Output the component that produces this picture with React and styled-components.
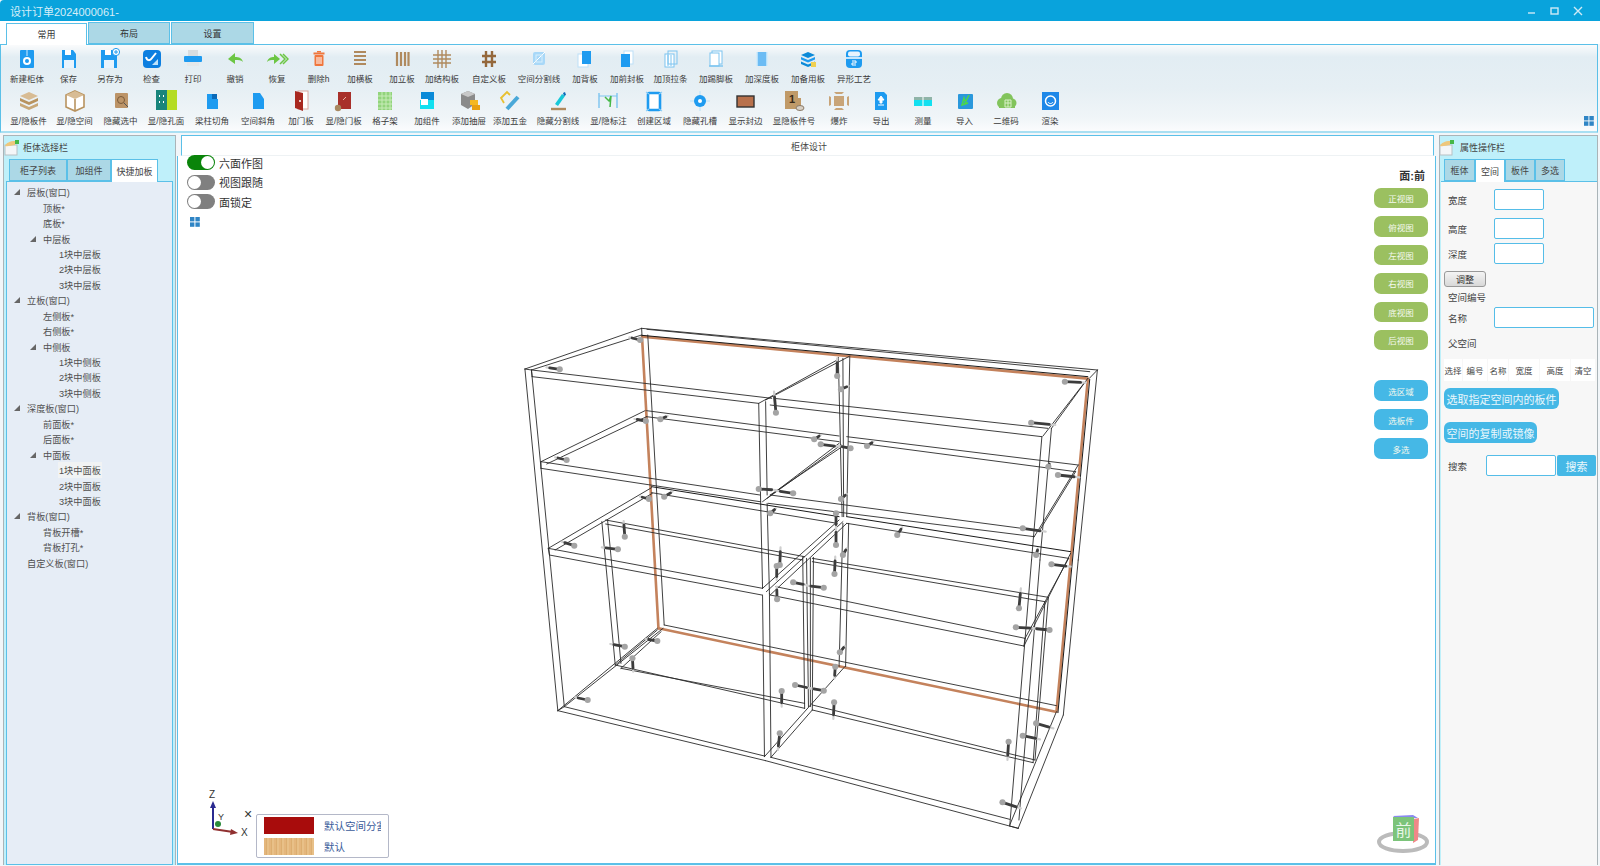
import React from 'react';
import styled, { createGlobalStyle } from 'styled-components';

const GlobalStyle = createGlobalStyle`
  html, body { margin: 0; padding: 0; overflow: hidden; background: #fff; }
  body { font-family: "Liberation Sans", "Noto Sans CJK SC", sans-serif; }
`

const BLUE = '#5bc0e8';

const Page = styled.div`
  width: 1600px;
  height: 866px;
  display: flex;
  flex-direction: column;
  background: #f2f6f9;
  overflow: hidden;
`

const TitleBar = styled.div`
  height: 21px;
  flex: none;
  background: #09a3dc;
  border-radius: 4px 0 0 0;
  display: flex;
  align-items: center;
  justify-content: space-between;
  padding: 0 16px 0 10px;
  color: #d6eef8;
  font-size: 11px;
`

const WinButtons = styled.div`
  display: flex;
  align-items: center;
  gap: 11px;
`

const TabBar = styled.div`
  height: 23px;
  flex: none;
  background: #fff;
  display: flex;
  align-items: flex-end;
  padding-left: 6px;
  gap: 1px;
`

const MainTab = styled.div`
  width: ${p => p.$w}px;
  height: 22px;
  box-sizing: border-box;
  display: flex;
  align-items: center;
  justify-content: center;
  font-size: 9px;
  color: #333;
  border: 1px solid ${BLUE};
  border-bottom: ${p => (p.$active ? '0' : `1px solid ${BLUE}`)};
  background: ${p => (p.$active ? '#fff' : '#acd8e6')};
  margin-bottom: ${p => (p.$active ? '-1px' : '0')};
  position: relative;
  z-index: 1;
`

const Ribbon = styled.div`
  height: 89px;
  flex: none;
  position: relative;
  box-sizing: border-box;
  border: 1px solid ${BLUE};
  border-bottom: 2px solid #a8dff2;
  margin-right: 2px;
  background: linear-gradient(#fafbfc 0%, #e2edf3 14%, #e6eff4 50%, #f0f5f8 85%, #fbfcfd 100%);
`

const RibbonRow = styled.div`
  height: 42px;
  display: flex;
`

const RibbonItem = styled.div`
  width: 40px;
  flex: none;
  margin-left: ${p => p.$ml}px;
  display: flex;
  flex-direction: column;
  align-items: center;
  color: #3a3a3a;
  font-size: 8.5px;
  line-height: 12px;
  white-space: nowrap;
`

const IconBox = styled.div`
  height: 27px;
  display: flex;
  align-items: center;
  justify-content: center;
  margin-bottom: 1px;
`

const CornerGrid = styled.div`
  position: absolute;
  right: 3px;
  bottom: 1px;
`

const Main = styled.div`
  flex: 1;
  display: flex;
  min-height: 0;
  padding: 2px 2px 1px 3px;
`

const SidePanel = styled.div`
  width: ${p => p.$w}px;
  flex: none;
  box-sizing: border-box;
  display: flex;
  flex-direction: column;
  border: 1px solid #aab4b8;
  border-bottom: 0;
  background: #bff0fa;
  padding: 0 ${p => p.$pr}px 0 ${p => p.$pl}px;
`

const PanelHead = styled.div`
  height: 23px;
  flex: none;
  display: flex;
  align-items: center;
  margin-left: ${p => p.$ml}px;
  gap: ${p => p.$gap}px;
  font-size: 9px;
  color: #444;
`

const SubTabs = styled.div`
  height: 22px;
  flex: none;
  display: flex;
  padding-left: ${p => p.$pl}px;
`

const SubTab = styled.div`
  width: ${p => p.$w}px;
  box-sizing: border-box;
  display: flex;
  align-items: center;
  justify-content: center;
  font-size: 9px;
  color: #444;
  border: 1px solid ${BLUE};
  border-bottom: ${p => (p.$active ? '0' : `1px solid ${BLUE}`)};
  background: ${p => (p.$active ? '#fff' : '#acd8e6')};
  height: ${p => (p.$active ? '23px' : '22px')};
  position: relative;
  z-index: 1;
`

const TreeBody = styled.div`
  flex: 1;
  box-sizing: border-box;
  border: 1px solid ${BLUE};
  background: #e6edf6;
  padding-top: 2.5px;
`

const TreeRow = styled.div`
  height: 15.45px;
  display: flex;
  align-items: center;
  padding-left: ${p => 4 + p.$level * 16}px;
  font-size: 9.2px;
  color: #505050;
  white-space: nowrap;
`

const TreeArrow = styled.span`
  width: 0;
  height: 0;
  flex: none;
  margin-right: 6px;
  margin-left: 3px;
  visibility: ${p => (p.$show ? 'visible' : 'hidden')};
  border-style: solid;
  border-width: 0 0 6px 6px;
  border-color: transparent transparent #666 transparent;
`

const TreeText = styled.span`
  background: ${p => (p.$hover ? '#f1f3f4' : 'transparent')};
  padding: 1px 1px;
`

const CenterPanel = styled.div`
  flex: 1;
  display: flex;
  flex-direction: column;
  margin: 0 3px 0 1px;
  min-width: 0;
`

const CenterHead = styled.div`
  height: 21px;
  flex: none;
  box-sizing: border-box;
  margin: 0 2px 0 4px;
  padding: 2px 0 0 3px;
  background: #fff;
  border: 1px solid ${BLUE};
  border-bottom: 1px solid #eef2f4;
  display: flex;
  align-items: center;
  justify-content: center;
  font-size: 9px;
  color: #444;
`

const Canvas = styled.div`
  flex: 1;
  position: relative;
  display: flex;
  justify-content: space-between;
  background: #fff;
  box-sizing: border-box;
  border: 1px solid ${BLUE};
  border-top: 0;
  border-bottom: 2px solid ${BLUE};
`

const ToggleColumn = styled.div`
  display: flex;
  flex-direction: column;
  gap: 4px;
  padding-left: 9px;
  margin-top: -1px;
`

const ToggleRow = styled.div`
  display: flex;
  align-items: center;
  gap: 4px;
  height: 15.5px;
  font-size: 11px;
  color: #333;
`

const Toggle = styled.div`
  width: 28px;
  height: 15px;
  box-sizing: border-box;
  border-radius: 8px;
  display: flex;
  align-items: center;
  padding: 0 1px;
  justify-content: ${p => (p.$on ? 'flex-end' : 'flex-start')};
  background: ${p => (p.$on ? '#0a840a' : '#808080')};
`

const Knob = styled.div`
  width: 13px;
  height: 13px;
  border-radius: 50%;
  background: #fff;
`

const GridSlot = styled.span`
  display: flex;
  margin: 2px 0 0 3px;
`

const ViewColumn = styled.div`
  display: flex;
  flex-direction: column;
  align-items: flex-end;
  padding: 13px 7px 0 0;
  position: relative;
  z-index: 1;
`

const FaceLabel = styled.div`
  font-size: 11px;
  font-weight: bold;
  line-height: 14px;
  color: #333;
  margin: 0 3px 5px 0;
`

const ViewGroup = styled.div`
  display: flex;
  flex-direction: column;
  gap: ${p => p.$gap}px;
  margin-bottom: ${p => p.$mb}px;
`

const ViewButton = styled.div`
  width: 54px;
  height: 20.4px;
  border-radius: 7px;
  background: ${p => (p.$blue ? '#45b8e6' : '#9bc060')};
  color: #f4f8ee;
  font-size: 8.5px;
  display: flex;
  align-items: center;
  justify-content: center;
`

const CabinetSvg = styled.svg`
  position: absolute;
  left: 332px;
  top: 164px;
`

const AxisSvg = styled.svg`
  position: absolute;
  left: 24px;
  bottom: 18px;
`

const Legend = styled.div`
  position: absolute;
  left: 78px;
  bottom: 5px;
  width: 133px;
  height: 44px;
  box-sizing: border-box;
  background: #fff;
  border: 1px solid #b4b8c8;
  border-radius: 2px;
  padding: 2px 0 0 7px;
  display: flex;
  flex-direction: column;
  gap: 4px;
`

const LegendRow = styled.div`
  display: flex;
  align-items: center;
  gap: 10px;
  height: 17px;
  font-size: 10.5px;
  color: #3b5b9a;
  white-space: nowrap;
`

const LegendText = styled.span`
  width: 57px;
  overflow: hidden;
`

const Swatch = styled.div`
  width: 50px;
  height: 17px;
  flex: none;
  background: ${p => (p.$wood
    ? 'repeating-linear-gradient(90deg, #e4b67c 0 2px, #dcae70 2px 3px, #e8c088 3px 5px)'
    : '#a80c0c')};
`

const CubeSvg = styled.svg`
  position: absolute;
  right: 4px;
  bottom: 8px;
`

const PropBody = styled.div`
  flex: 1;
  box-sizing: border-box;
  margin-left: 1px;
  border-top: 1px solid ${BLUE};
  background: #f7f7f7;
  padding-left: 3px;
  display: flex;
  flex-direction: column;
`

const FormRow = styled.div`
  display: flex;
  align-items: center;
  height: ${p => p.$h}px;
  margin-top: ${p => p.$mt}px;
  font-size: 9.5px;
  color: #444;
`

const FormLabel = styled.span`
  width: ${p => p.$w || 50}px;
  padding-left: 4px;
  box-sizing: border-box;
  flex: none;
`

const Input = styled.div`
  width: ${p => p.$w}px;
  height: 100%;
  box-sizing: border-box;
  background: #fff;
  border: 1px solid #55bde8;
  border-radius: 2px;
`

const AdjustButton = styled.div`
  width: 42px;
  height: 16px;
  margin-top: 7px;
  box-sizing: border-box;
  border: 1px solid #999;
  border-radius: 3px;
  background: linear-gradient(#f4f4f4, #d8d8d8);
  display: flex;
  align-items: center;
  justify-content: center;
  font-size: 9px;
  color: #333;
`

const GridHeader = styled.div`
  display: flex;
  height: 22px;
  margin-top: 6px;
  gap: 1px;
`

const GridCell = styled.div`
  width: ${p => p.$w}px;
  flex: none;
  background: #fff;
  display: flex;
  align-items: center;
  justify-content: center;
  font-size: 8.5px;
  color: #444;
`

const ActionButton = styled.div`
  width: ${p => p.$w}px;
  height: 21px;
  margin-top: ${p => p.$mt}px;
  border-radius: 6px;
  background: #45b8e6;
  color: #eaf7fc;
  font-size: 11px;
  display: flex;
  align-items: center;
  justify-content: center;
  white-space: nowrap;
`

const SearchButton = styled.div`
  width: 39px;
  height: 100%;
  margin-left: 1px;
  background: #45b8e6;
  border-radius: 2px;
  color: #eaf7fc;
  font-size: 11px;
  display: flex;
  align-items: center;
  justify-content: center;
`

const G = '#1e9bf0';
const W = '#b08a5e';

const icons = {
  new: <><rect x="5" y="3" width="14" height="18" rx="1" fill={G} /><rect x="11.5" y="3" width="1" height="6" fill="#cfeafc" /><circle cx="12" cy="14" r="4" fill="#fff" /><circle cx="12" cy="14" r="2" fill={G} /></>,
  save: <><path d="M5 3h11l3 4v14H5z" fill={G} /><rect x="8" y="3" width="6" height="5" fill="#fff" /><rect x="7" y="13" width="10" height="8" fill="#e8f4fd" /></>,
  saveas: <><path d="M3 3h13l3 4v14H3z" fill={G} /><rect x="7" y="3" width="6" height="5" fill="#fff" /><rect x="6" y="13" width="10" height="8" fill="#e8f4fd" /><circle cx="18" cy="5" r="3.6" fill="#fff" stroke={G} /><path d="M18 3v4M16 5h4" stroke={G} /></>,
  check: <><rect x="3" y="3" width="18" height="18" rx="4" fill="#0d7fe0" /><path d="M6 10c1 4 4 4 6 1l4-5" stroke="#fff" strokeWidth="2" fill="none" /><path d="M12 18l6-6v6z" fill="#bfe3fb" /></>,
  print: <><rect x="7" y="3" width="10" height="6" fill="#d8dde0" /><rect x="3" y="9" width="18" height="6" rx="1" fill={G} /><rect x="6" y="15" width="12" height="4" fill="#e4e8ea" /></>,
  undo: <path d="M5 12l7-6v4c4 0 7 1 8 5-2-2-4-2-8-2v4z" fill="#6cc644" />,
  redo: <><path d="M15 12l-6-5v3c-3 0-6 1-7 5 2-2 4-2 7-2v4z" fill="#6cc644" /><path d="M15 7l5 5-5 5M18 7l5 5-5 5" stroke="#6cc644" strokeWidth="1.5" fill="none" /></>,
  del: <><rect x="7.5" y="8" width="9" height="11" rx="1" fill="#f0763c" /><rect x="6.5" y="5.5" width="11" height="2" fill="#f0763c" /><rect x="10" y="4" width="4" height="1.5" fill="#f0763c" /><path d="M10 10v7M12 10v7M14 10v7" stroke="#fff" /></>,
  hboard: <path d="M6 5h12M6 9h12M6 13h12M6 17h12" stroke={W} strokeWidth="2.2" />,
  vboard: <path d="M7 5v14M11 5v14M15 5v14M18.5 5v14" stroke={W} strokeWidth="2.2" />,
  struct: <path d="M3 8h18M3 12h18M3 16h18M8 3v18M12 3v18M16 3v18" stroke={W} strokeWidth="1.4" />,
  custom: <path d="M5 9h14M5 15h14M9 4v16M15 4v16" stroke="#94683c" strokeWidth="2.4" />,
  split: <><rect x="6" y="5" width="12" height="13" rx="2" fill="#a8d8f8" /><path d="M6 17L18 5" stroke="#fff" /><rect x="9" y="8" width="6" height="7" fill="none" stroke="#d8effc" /></>,
  back: <><rect x="5" y="7" width="10" height="13" fill="#fff" stroke="#bde0f8" /><rect x="9" y="4" width="9" height="13" fill={G} /></>,
  front: <><rect x="9" y="4" width="9" height="13" fill="#fff" stroke="#bde0f8" /><rect x="6" y="7" width="9" height="13" fill={G} /></>,
  top: <><rect x="6" y="7" width="9" height="13" fill="#fff" stroke="#7cc4f0" /><rect x="9" y="4" width="9" height="13" fill="none" stroke="#7cc4f0" /><path d="M9 8v11M12 8v11" stroke="#7cc4f0" /></>,
  foot: <><rect x="8" y="4" width="10" height="13" fill="#fff" stroke="#7cc4f0" /><rect x="6" y="6" width="9" height="13" fill="#fff" stroke="#7cc4f0" /><path d="M5 19h14" stroke="#7cc4f0" strokeWidth="1.4" /></>,
  depth: <><rect x="7" y="5" width="10" height="14" fill="#6cbcf4" /><path d="M7 5v14M17 5v14" stroke="#d0ecfc" strokeWidth="1.5" /></>,
  spare: <><path d="M12 5l7 3-7 3-7-3z" fill="#0b8ad8" /><path d="M5 10l7 3 7-3v2.5l-7 3-7-3z" fill="#1e9bf0" /><path d="M5 14.5l7 3 7-3V17l-7 3-7-3z" fill="#0b8ad8" /><rect x="15" y="15" width="5" height="5" fill="#f0d050" /></>,
  shape: <><rect x="4" y="3" width="16" height="18" rx="4" fill={G} /><path d="M4 11h16" stroke="#fff" strokeWidth="1.5" /><rect x="6" y="4.5" width="12" height="5" rx="2" fill="#e8f4fd" /><path d="M10 14h4v2h-4v2h4" stroke="#fff" fill="none" /></>,
  boards: <><path d="M12 3l9 4-9 4-9-4z" fill="#d8bc94" /><path d="M3 9l9 4 9-4v3l-9 4-9-4z" fill="#b8935f" /><path d="M3 14l9 4 9-4v3l-9 4-9-4z" fill="#c8a878" /></>,
  box: <><path d="M12 2l9 4v12l-9 4-9-4V6z" fill="#fff" stroke="#b8935f" strokeWidth="1.6" /><path d="M3 6l9 4 9-4-9-4z" fill="#d8bc94" /><path d="M12 10v12" stroke="#b8935f" strokeWidth="1.6" /></>,
  hide: <><rect x="6" y="4" width="13" height="15" rx="1" fill="#bc9468" /><circle cx="12" cy="11" r="3.5" fill="none" stroke="#7a5a38" /><path d="M15 14l4 4" stroke="#555" /></>,
  holes: <><rect x="2" y="1" width="11" height="20" fill="#18857c" /><rect x="13" y="1" width="10" height="20" fill="#b4dc24" /><path d="M5 7h1M9 7h1M5 13h1M9 13h1" stroke="#fff" strokeWidth="2" /></>,
  cut: <><path d="M7 5h7v5h4v10H7z" fill={G} /><rect x="12" y="5" width="5" height="5" fill="#0b6ab8" /></>,
  slant: <path d="M7 4h7l4 6v10H7z" fill={G} />,
  door: <><rect x="9" y="2" width="10" height="18" fill="#fff" stroke="#d8a8a0" /><path d="M6 2l8 2v18l-8-3z" fill="#a82820" /><circle cx="11" cy="12" r="1" fill="#fff" /></>,
  door2: <><rect x="6" y="3" width="13" height="17" fill="#a8302a" /><path d="M11 11l3-3" stroke="#e8b0a0" /><circle cx="6" cy="19" r="3.2" fill="#a88860" /></>,
  lattice: <><rect x="5" y="3" width="14" height="18" fill="#92d47c" /><path d="M5 7h14M5 11h14M5 15h14M5 19h14M9 3v18M13 3v18M17 3v18" stroke="#c8ecb8" /></>,
  combo: <><rect x="6" y="3" width="13" height="12" fill="#0b8ad8" /><rect x="5" y="11" width="14" height="9" fill="#12e0f0" /><rect x="6" y="10" width="7" height="6" fill="#fff" /></>,
  drawer: <><path d="M11 2l7 3v10l-7 5-7-4V5z" fill="#8a8a8a" /><path d="M11 2l7 3-7 3-7-3z" fill="#c8c8c8" /><rect x="13" y="11" width="8" height="5" fill="#f4b820" /><rect x="15" y="16" width="8" height="5" fill="#e8a010" /></>,
  metal: <><path d="M6 14L3 9l6-6 3 3" stroke="#e8c030" strokeWidth="1.8" fill="none" /><path d="M9 20L20 8" stroke="#4aa8d8" strokeWidth="4" /></>,
  dash: <><path d="M9 15l7-10 3 2-7 10z" fill="#18c8d8" /><path d="M17 4l2-1 1 3-2 1z" fill="#0b6ab8" /><path d="M5 20h15" stroke="#b08a5e" strokeWidth="2.4" /></>,
  label: <><path d="M3 4v15M21 4v15" stroke="#7cc4f0" strokeWidth="1.4" /><path d="M3 7h18" stroke="#7cc4f0" /><path d="M9 8l4 4 2-5-1 11" stroke="#46b848" strokeWidth="1.5" fill="none" /></>,
  region: <><rect x="6" y="4" width="12" height="17" rx="1" fill="#fff" stroke={G} strokeWidth="2.6" /><path d="M4 3l3 2M20 3l-3 2M4 22l3-2M20 22l-3-2" stroke="#8ccdf6" strokeWidth="1.2" /></>,
  slot: <><path d="M12 2v20M2 12h20" stroke="#b8e2fa" /><circle cx="12" cy="12" r="6" fill="#1e9bf0" /><circle cx="12" cy="12" r="2" fill="#fff" /></>,
  edge: <rect x="4" y="7" width="17" height="11" fill="#b8714c" stroke="#333" strokeWidth="1.4" />,
  number: <><path d="M3 2h13v7h3v11H3z" fill="#c09a68" /><text x="7" y="14" fontSize="11" fontWeight="bold" fill="#3a2a18" fontFamily="Liberation Sans">1</text><ellipse cx="18" cy="19" rx="4" ry="2.5" fill="#d8d0c4" stroke="#8a7a68" /></>,
  explode: <><rect x="7" y="7" width="10" height="10" fill="#c8a478" /><path d="M7 3h10l-2 2H9zM7 21h10l-2-2H9zM2 7v10l2-1V8zM22 7v10l-2-1V8z" fill="#c8a478" /></>,
  export: <><path d="M6 3h9l3 3v15H6z" fill={G} /><path d="M12 7l-3 4h2v3h2v-3h2zM9 16h6" stroke="#fff" fill="#fff" /></>,
  measure: <><rect x="3" y="8" width="18" height="3" fill="#8fb4a8" /><rect x="3" y="11" width="18" height="6" fill="#12e0f0" /><path d="M12 8v9" stroke="#fff" /></>,
  import: <><rect x="5" y="5" width="15" height="15" rx="1" fill="#2a98dc" /><path d="M16 6l-4 8h3l-6 2 2-7 1 3" stroke="#4cd848" strokeWidth="1.5" fill="none" /></>,
  qr: <><circle cx="8" cy="14" r="5" fill="#82c45c" /><circle cx="13" cy="10" r="6" fill="#82c45c" /><circle cx="18" cy="14" r="4.5" fill="#82c45c" /><rect x="5" y="14" width="16" height="5" fill="#82c45c" /><path d="M11 11h6v7h-6zM14 11v7M11 14h6" stroke="#d8f0c8" fill="none" /></>,
  render: <><rect x="4" y="3" width="17" height="18" fill="#1e88e8" /><circle cx="12.5" cy="12" r="5" fill="none" stroke="#fff" strokeWidth="1.5" /><path d="M10 13c1 2 4 2 5 0" stroke="#fff" fill="none" /></>,
};

const row1 = [
  ['新建柜体', 27, 'new'], ['保存', 68.5, 'save'], ['另存为', 110, 'saveas'], ['检查', 151.5, 'check'],
  ['打印', 193, 'print'], ['撤销', 235, 'undo'], ['恢复', 277, 'redo'], ['删除h', 318.5, 'del'],
  ['加横板', 360, 'hboard'], ['加立板', 402, 'vboard'], ['加结构板', 442, 'struct'], ['自定义板', 489, 'custom'],
  ['空间分割线', 539, 'split'], ['加背板', 585, 'back'], ['加前封板', 627, 'front'], ['加顶拉条', 670.5, 'top'],
  ['加踢脚板', 716, 'foot'], ['加深度板', 762, 'depth'], ['加备用板', 808, 'spare'], ['异形工艺', 854, 'shape'],
];

const row2 = [
  ['显/隐板件', 28.5, 'boards'], ['显/隐空间', 74.5, 'box'], ['隐藏选中', 120.5, 'hide'], ['显/隐孔面', 166, 'holes'],
  ['梁柱切角', 212, 'cut'], ['空间斜角', 258, 'slant'], ['加门板', 301, 'door'], ['显/隐门板', 343.6, 'door2'],
  ['格子架', 385, 'lattice'], ['加组件', 427, 'combo'], ['添加抽屉', 469, 'drawer'], ['添加五金', 510, 'metal'],
  ['隐藏分割线', 558, 'dash'], ['显/隐标注', 608.5, 'label'], ['创建区域', 654, 'region'], ['隐藏孔槽', 700, 'slot'],
  ['显示封边', 745.5, 'edge'], ['显隐板件号', 794, 'number'], ['爆炸', 839, 'explode'], ['导出', 881, 'export'],
  ['测量', 923, 'measure'], ['导入', 964.6, 'import'], ['二维码', 1006, 'qr'], ['渲染', 1050, 'render'],
];

const tree = [
  [0, '层板(窗口)', 1], [1, '顶板*'], [1, '底板*'], [1, '中层板', 1], [2, '1块中层板'], [2, '2块中层板'], [2, '3块中层板'],
  [0, '立板(窗口)', 1], [1, '左侧板*'], [1, '右侧板*'], [1, '中侧板', 1], [2, '1块中侧板'], [2, '2块中侧板'], [2, '3块中侧板'],
  [0, '深度板(窗口)', 1], [1, '前面板*'], [1, '后面板*'], [1, '中面板', 1], [2, '1块中面板', 0, 1], [2, '2块中面板'], [2, '3块中面板'],
  [0, '背板(窗口)', 1], [1, '背板开槽*'], [1, '背板打孔*'], [0, '自定义板(窗口)'],
];

// coordinates below are in the viewBox of the drawing (1568 x 1560 over 600 x 520 px)
const lines = [
  // carcass
  [39,147,344,25],[344,25,1535,150],[358,28,1515,155],[56,150,344,45],[39,147,125,1172],[56,150,142,1160],[39,147,56,150],[58,170,56,150],
  [1535,150,1485,720],[1485,720,1446,1185],[1446,1185,1328,1525],[1428,1175,1306,1515],[1535,150,1514,175],[1306,1518,1328,1525],
  [125,1172,668,1322],[668,1322,1328,1525],[142,1160,665,1308],[682,1312,1306,1498],[125,1172,142,1160],
  [360,45,403,915],[403,915,1428,1157],[125,1172,385,925],[142,1160,400,925],[344,25,345,48],
  // top panel
  [57,150,684,235],[58,170,649,250],[690,235,1405,325],[680,255,1390,350],[1415,325,1510,175],[1393,348,1500,190],
  [1415,325,1385,720],[1385,720,1330,1500],[1390,350,1363,720],[1363,720,1306,1518],
  // upper shelf
  [81,425,353,272],[96,432,357,290],[81,425,653,525],[81,445,653,545],[81,425,81,445],
  [357,272,860,348],[357,290,860,365],[880,350,1485,435],[885,365,1478,455],[680,525,1370,630],[675,550,1370,650],[1370,650,1485,435],[1385,630,1478,455],
  // lower shelf
  [100,685,370,503],[118,690,372,520],[100,685,660,805],[103,705,658,825],[100,685,103,705],
  [370,518,855,610],[880,610,1460,715],[695,800,1346,955],[680,825,1343,978],[1343,978,1465,700],[1346,955,1460,715],[1346,955,1343,978],
  // divider
  [650,250,655,545],[668,245,672,525],[660,825,665,1310],[678,820,682,1312],[858,112,868,590],[888,108,880,590],[870,115,872,590],
  [870,610,860,1040],[885,610,877,1040],[650,250,855,120],[668,240,885,110],[660,545,860,370],[680,525,868,380],[672,535,865,375],
  [660,805,860,600],[680,825,880,610],[670,815,870,605],[665,1310,875,1040],[682,1312,790,1170],[655,545,660,805],[672,550,678,820],
  // inner frame
  [240,605,275,1035],[255,600,290,1030],[250,600,770,710],[250,612,765,720],[790,715,1407,832],[790,725,1398,845],
  [765,710,770,1165],[775,715,780,1160],[785,715,785,1160],[793,712,790,1170],[1407,832,1372,1320],[1398,845,1367,1328],
  [275,1035,385,930],[290,1045,395,935],[275,1035,770,1165],[290,1045,770,1150],[790,1170,1367,1328],[790,1155,1372,1320],
];

const heavy = [[370,500,860,590],[880,590,1465,695],[345,46,1510,170],[1515,178,1432,1178]];
const brown = [[346,50,1510,176],[345,50,388,925],[388,925,1426,1175],[1510,178,1428,1175]];

const screws = [
  [340,60,312,52],[130,148,95,142],[1450,185,1505,188],[855,168,855,115],[865,208,885,198],[695,278,690,215],[1362,308,1425,315],
  [355,303,325,297],[393,298,412,288],[148,420,118,412],[795,358,812,345],[812,373,860,380],[890,385,860,378],[933,378,950,365],
  [1432,465,1488,472],[650,507,695,510],[740,520,695,512],[865,537,880,522],[363,537,340,530],[403,530,425,515],[680,580,695,565],
  [852,580,852,625],[1340,625,1400,635],[1375,705,1380,685],[1012,645,1025,622],[852,675,852,625],[870,705,880,685],[300,650,297,603],
  [168,677,135,665],[282,688,240,682],[705,735,707,682],[848,762,850,710],[1330,865,1335,805],[1415,733,1465,740],[697,738,697,780],
  [740,787,775,795],[820,803,775,797],[698,838,697,800],[1322,922,1375,925],[1410,930,1365,925],[300,980,262,972],[385,963,355,957],
  [862,997,875,978],[320,1015,322,1055],[850,1040,848,1075],[745,1095,785,1105],[820,1112,785,1105],[710,1113,710,1160],[847,1147,845,1197],
  [203,1140,170,1132],[705,1240,700,1290],[1303,1265,1300,1320],[1340,1247,1385,1258],[1375,1210,1420,1225],[1287,1447,1335,1465],[1407,440,1410,430],
];

function Cabinet() {
  return (
    <CabinetSvg width="600" height="520" viewBox="0 0 1568 1560" preserveAspectRatio="none">
      <g fill="none" strokeLinecap="round">
        {brown.map(([a, b, c, d], i) => (
          <line key={i} x1={a} y1={b} x2={c} y2={d} stroke="#c4825c" strokeWidth="2.6" vectorEffect="non-scaling-stroke" />
        ))}
        {lines.map(([a, b, c, d], i) => (
          <line key={i} x1={a} y1={b} x2={c} y2={d} stroke="#2a2a2a" strokeWidth="0.9" vectorEffect="non-scaling-stroke" />
        ))}
        {heavy.map(([a, b, c, d], i) => (
          <line key={i} x1={a} y1={b} x2={c} y2={d} stroke="#1a1a1a" strokeWidth="1" vectorEffect="non-scaling-stroke" />
        ))}
        {screws.map(([hx, hy, tx, ty], i) => (
          <g key={i}>
            <line x1={tx} y1={ty} x2={(hx + tx) / 2} y2={(hy + ty) / 2} stroke="#cfcfcf" strokeWidth="2.2" vectorEffect="non-scaling-stroke" />
            <line x1={hx} y1={hy} x2={hx * 0.25 + tx * 0.75} y2={hy * 0.25 + ty * 0.75} stroke="#3c3c3c" strokeWidth="2.8" vectorEffect="non-scaling-stroke" />
            <ellipse cx={hx} cy={hy} rx="8" ry="9" fill="#a4a4a4" />
          </g>
        ))}
      </g>
    </CabinetSvg>
  );
}

function GridIcon() {
  return (
    <svg width="10" height="10" viewBox="0 0 10 10" fill="#2f85c5">
      <rect width="4.4" height="4.4" /><rect x="5.4" width="4.4" height="4.4" />
      <rect y="5.4" width="4.4" height="4.4" /><rect x="5.4" y="5.4" width="4.4" height="4.4" />
    </svg>
  );
}

function NoteIcon() {
  return (
    <svg width="16" height="16" viewBox="0 0 16 16">
      <rect x="1" y="5" width="12" height="10" fill="#f4f6f8" stroke="#b8c0c4" />
      <path d="M1 6c1-3 5-5 10-5v4c-3 0-7 2-10 1z" fill="#eec77c" />
      <rect x="11" y="0" width="4" height="4" fill="#45b848" />
    </svg>
  );
}

function RibbonLine({ items }) {
  return (
    <RibbonRow>
      {items.map(([label, center, icon], i) => {
        const prev = i === 0 ? -19 : items[i - 1][1];
        return (
          <RibbonItem key={label} $ml={center - prev - 40}>
            <IconBox>
              <svg width="24" height="24" viewBox="0 0 24 24">{icons[icon]}</svg>
            </IconBox>
            {label}
          </RibbonItem>
        );
      })}
    </RibbonRow>
  );
}

export default function App() {
  return (
    <Page>
      <GlobalStyle />
      <TitleBar>
        <span>设计订单2024000061-</span>
        <WinButtons>
          <svg width="12" height="12" viewBox="0 0 12 12"><path d="M2 8h7" stroke="#cfeaf6" strokeWidth="1.4" /></svg>
          <svg width="12" height="12" viewBox="0 0 12 12"><rect x="2" y="3" width="7" height="6" fill="none" stroke="#cfeaf6" strokeWidth="1.4" /></svg>
          <svg width="12" height="12" viewBox="0 0 12 12"><path d="M2 2l8 8M10 2l-8 8" stroke="#cfeaf6" strokeWidth="1.4" /></svg>
        </WinButtons>
      </TitleBar>
      <TabBar>
        <MainTab $w={81} $active>常用</MainTab>
        <MainTab $w={82}>布局</MainTab>
        <MainTab $w={83}>设置</MainTab>
      </TabBar>
      <Ribbon>
        <RibbonLine items={row1} />
        <RibbonLine items={row2} />
        <CornerGrid><GridIcon /></CornerGrid>
      </Ribbon>
      <Main>
        <SidePanel $w={173} $pl={2} $pr={2}>
          <PanelHead $ml={-2} $gap={3}><NoteIcon />柜体选择栏</PanelHead>
          <SubTabs $pl={3}>
            <SubTab $w={58}>柜子列表</SubTab>
            <SubTab $w={44}>加组件</SubTab>
            <SubTab $w={47} $active>快捷加板</SubTab>
          </SubTabs>
          <TreeBody>
            {tree.map(([level, text, arrow, hover]) => (
              <TreeRow key={text} $level={level}>
                <TreeArrow $show={arrow} />
                <TreeText $hover={hover}>{text}</TreeText>
              </TreeRow>
            ))}
          </TreeBody>
        </SidePanel>
        <CenterPanel>
          <CenterHead>柜体设计</CenterHead>
          <Canvas>
            <ToggleColumn>
              <ToggleRow><Toggle $on><Knob /></Toggle>六面作图</ToggleRow>
              <ToggleRow><Toggle><Knob /></Toggle>视图跟随</ToggleRow>
              <ToggleRow><Toggle><Knob /></Toggle>面锁定</ToggleRow>
              <ToggleRow><GridSlot><GridIcon /></GridSlot></ToggleRow>
            </ToggleColumn>
            <ViewColumn>
              <FaceLabel>面:前</FaceLabel>
              <ViewGroup $gap={8} $mb={30}>
                {['正视图', '俯视图', '左视图', '右视图', '底视图', '后视图'].map(t => <ViewButton key={t}>{t}</ViewButton>)}
              </ViewGroup>
              <ViewGroup $gap={8.6} $mb={0}>
                {['选区域', '选板件', '多选'].map(t => <ViewButton key={t} $blue>{t}</ViewButton>)}
              </ViewGroup>
            </ViewColumn>
            <Cabinet />
            <AxisSvg width="60" height="60" viewBox="0 0 60 60">
              <path d="M11 44V20" stroke="#2a2a90" strokeWidth="2" />
              <path d="M11 16l3 7h-6z" fill="#2a2a90" />
              <path d="M11 44l20 3" stroke="#903030" strokeWidth="2" />
              <path d="M36 48l-8 2 1-6z" fill="#903030" />
              <circle cx="16" cy="39" r="3" fill="#2a8a3a" />
              <text x="7" y="13" fontSize="10" fill="#333" fontFamily="Liberation Sans">Z</text>
              <text x="16" y="35" fontSize="9" fill="#333" fontFamily="Liberation Sans">Y</text>
              <text x="39" y="51" fontSize="10" fill="#333" fontFamily="Liberation Sans">X</text>
              <text x="42" y="34" fontSize="14" fill="#333" fontFamily="Liberation Sans">×</text>
            </AxisSvg>
            <Legend>
              <LegendRow><Swatch /><LegendText>默认空间分割</LegendText></LegendRow>
              <LegendRow><Swatch $wood /><LegendText>默认</LegendText></LegendRow>
            </Legend>
            <CubeSvg width="56" height="44" viewBox="0 0 56 44">
              <ellipse cx="28" cy="31" rx="24" ry="9" fill="none" stroke="#bbb" strokeWidth="4" />
              <path d="M18 5l20-1 5 3-21 1z" fill="#8a8af0" />
              <path d="M39 8l5-1-1 22-5 3z" fill="#f08888" />
              <rect x="18" y="6" width="21" height="24" fill="#7cc47a" />
              <text x="28.5" y="25" textAnchor="middle" fontSize="16" fill="#e8f6e8" fontFamily="Noto Sans CJK SC">前</text>
            </CubeSvg>
          </Canvas>
        </CenterPanel>
        <SidePanel $w={159} $pl={0} $pr={0}>
          <PanelHead $ml={-1} $gap={5}><NoteIcon />属性操作栏</PanelHead>
          <SubTabs $pl={4}>
            <SubTab $w={31}>框体</SubTab>
            <SubTab $w={30} $active>空间</SubTab>
            <SubTab $w={30}>板件</SubTab>
            <SubTab $w={30}>多选</SubTab>
          </SubTabs>
          <PropBody>
            <FormRow $h={21} $mt={7}><FormLabel>宽度</FormLabel><Input $w={50} /></FormRow>
            <FormRow $h={21} $mt={8}><FormLabel>高度</FormLabel><Input $w={50} /></FormRow>
            <FormRow $h={21} $mt={4}><FormLabel>深度</FormLabel><Input $w={50} /></FormRow>
            <AdjustButton>调整</AdjustButton>
            <FormRow $h={20} $mt={0}><FormLabel>空间编号</FormLabel></FormRow>
            <FormRow $h={21} $mt={0}><FormLabel>名称</FormLabel><Input $w={100} /></FormRow>
            <FormRow $h={20} $mt={5}><FormLabel>父空间</FormLabel></FormRow>
            <GridHeader>
              <GridCell $w={18}>选择</GridCell>
              <GridCell $w={24}>编号</GridCell>
              <GridCell $w={20}>名称</GridCell>
              <GridCell $w={30}>宽度</GridCell>
              <GridCell $w={30}>高度</GridCell>
              <GridCell $w={24}>清空</GridCell>
            </GridHeader>
            <ActionButton $w={115} $mt={7}>选取指定空间内的板件</ActionButton>
            <ActionButton $w={93} $mt={13}>空间的复制或镜像</ActionButton>
            <FormRow $h={21} $mt={12}>
              <FormLabel $w={42}>搜索</FormLabel>
              <Input $w={70} />
              <SearchButton>搜索</SearchButton>
            </FormRow>
          </PropBody>
        </SidePanel>
      </Main>
    </Page>
  );
}
